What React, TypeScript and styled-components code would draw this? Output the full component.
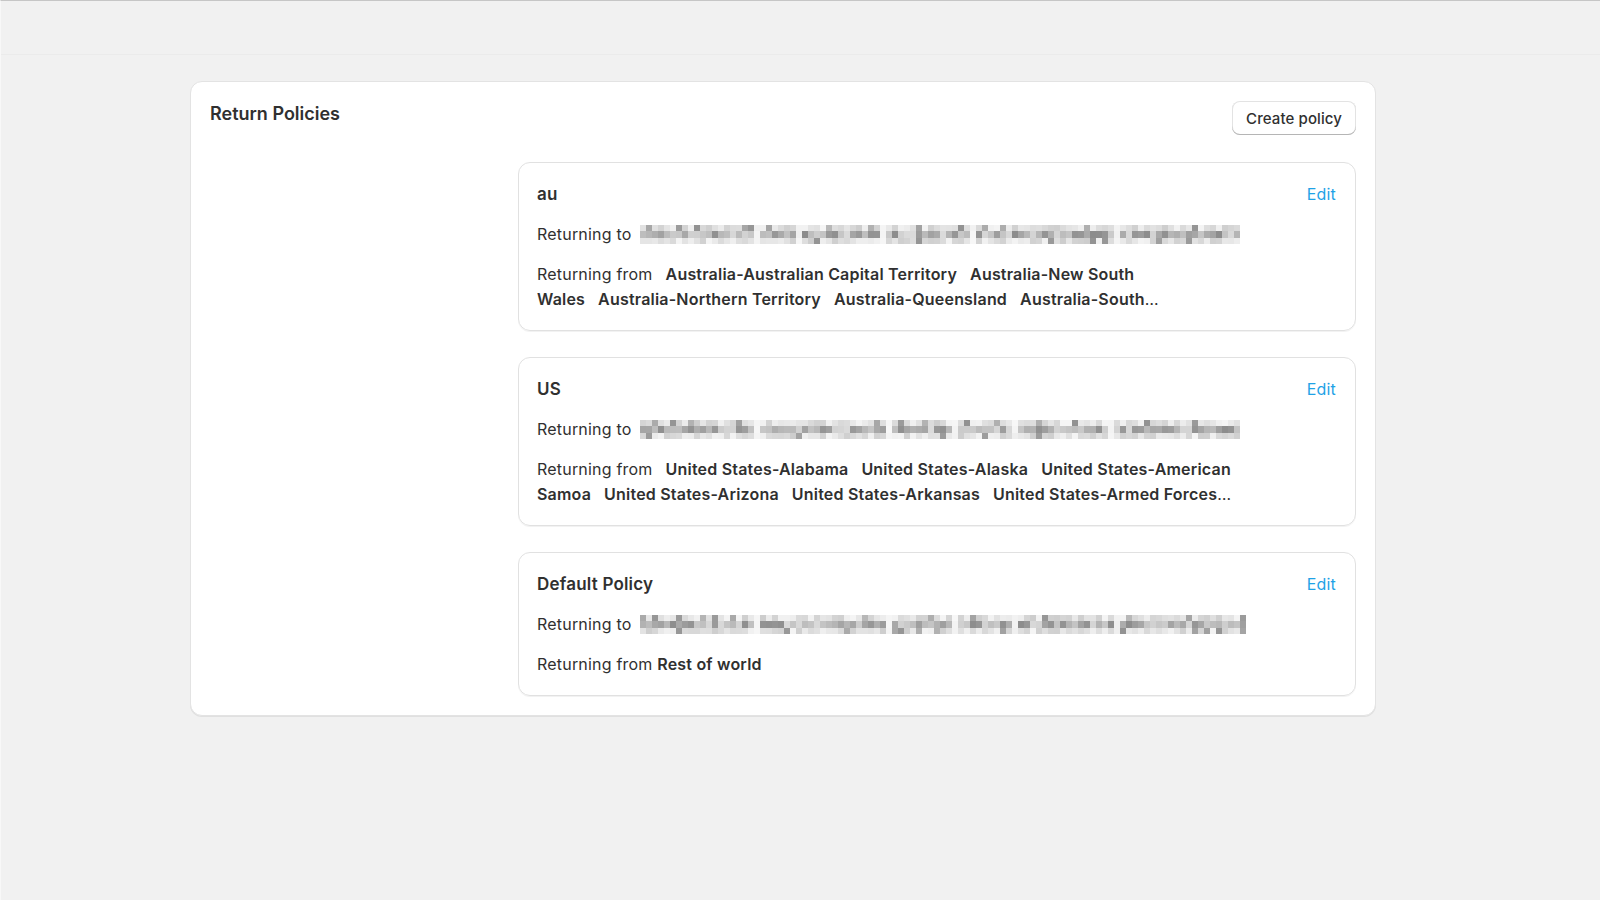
import React from 'react';
import styled, { createGlobalStyle } from 'styled-components';

const GlobalStyle = createGlobalStyle`
  * {
    box-sizing: border-box;
  }

  body {
    margin: 0;
    background: #f1f1f1;
    font-family: Inter, "Noto Sans", "Liberation Sans", sans-serif;
    color: #303030;
    -webkit-font-smoothing: antialiased;
  }
`;

const Page = styled.div`
  min-height: 100vh;
  border-top: 1px solid #c6c6c6;
  border-left: 1px solid #f8f8f8;
`;

const TopStrip = styled.div`
  height: 54px;
  border-bottom: 1px solid #ebebeb;
`;

const Main = styled.main`
  padding: 26px 0 40px 189px;
`;

const Panel = styled.section`
  width: 1186px;
  background: #fff;
  border: 1px solid #e3e3e3;
  border-radius: 12px;
  box-shadow: 0 1px 0 rgba(0, 0, 0, 0.07);
  padding: 19px;
`;

const PanelHeader = styled.div`
  display: flex;
  justify-content: space-between;
  align-items: flex-start;
`;

const Title = styled.h1`
  margin: 0;
  font-size: 18px;
  line-height: 25px;
  font-weight: 600;
  color: #303030;
`;

const CreateButton = styled.button`
  height: 34px;
  padding: 0 14px;
  border: none;
  border-radius: 8px;
  background: #fff;
  font-family: inherit;
  font-size: 15px;
  font-weight: 500;
  letter-spacing: 0.1px;
  color: #303030;
  cursor: pointer;
  box-shadow: inset 0 -1px 0 0 #b5b5b5, inset 0 0 0 1px #e3e3e3;
`;

const PolicyList = styled.div`
  width: 838px;
  margin: 27px 0 0 auto;
  display: flex;
  flex-direction: column;
  gap: 26px;
`;

const PolicyCard = styled.article`
  border: 1px solid #e1e1e1;
  border-radius: 12px;
  box-shadow: 0 1px 0 rgba(0, 0, 0, 0.05);
  padding: 19px 19px 18px 18px;
  display: flex;
  flex-direction: column;
  gap: 15px;
`;

const CardHeader = styled.div`
  display: flex;
  justify-content: space-between;
  align-items: center;
`;

const CardTitle = styled.h2`
  margin: 0;
  font-size: 17px;
  line-height: 25px;
  font-weight: 600;
  letter-spacing: 0.2px;
  color: #303030;
`;

const EditLink = styled.a`
  font-size: 16px;
  line-height: 25px;
  letter-spacing: 0.2px;
  color: #1fa2e6;
  text-decoration: none;
  cursor: pointer;
`;

const Row = styled.div`
  font-size: 16px;
  line-height: 25px;
  letter-spacing: 0.2px;
  color: #303030;
`;

const Clamp = styled(Row)`
  max-width: 704px;
  display: -webkit-box;
  -webkit-line-clamp: 2;
  -webkit-box-orient: vertical;
  overflow: hidden;
`;

const Region = styled.span`
  font-weight: 600;
  margin-left: 13px;
`;

const Strong = styled.strong`
  font-weight: 600;
`;

const RedactedBox = styled.svg`
  vertical-align: -4px;
  margin-left: 8px;
`;

// fake pixelated address, deterministic per seed
function rng(seed: number) {
  let a = seed;
  return () => {
    a |= 0;
    a = (a + 0x6d2b79f5) | 0;
    let t = Math.imul(a ^ (a >>> 15), 1 | a);
    t = (t + Math.imul(t ^ (t >>> 7), 61 | t)) ^ t;
    return ((t ^ (t >>> 14)) >>> 0) / 4294967296;
  };
}

const Redacted: React.FC<{ seed: number; words: number[] }> = ({ seed, words }) => {
  const rand = rng(seed);
  const cell = 6;
  const rows = [0, 6, 13];
  const heights = [6, 7, 6];
  const rects: React.ReactNode[] = [];
  let col = 0;
  words.forEach((len, wi) => {
    for (let i = 0; i < len; i++) {
      rows.forEach((y, ri) => {
        const mid = ri === 1;
        const base = mid ? 140 + rand() * 80 : 205 + rand() * 40;
        const dark = !mid && rand() < 0.1 ? 60 : 0;
        const v = Math.round(Math.min(246, base - dark));
        rects.push(
          <rect key={`${col}-${ri}`} x={col * cell} y={y} width={cell} height={heights[ri]} fill={`rgb(${v},${v},${v})`} />
        );
      });
      col++;
    }
    if (wi < words.length - 1) {
      rows.forEach((y, ri) => {
        const v = Math.round(238 + rand() * 10);
        rects.push(
          <rect key={`${col}-${ri}`} x={col * cell} y={y} width={cell} height={heights[ri]} fill={`rgb(${v},${v},${v})`} />
        );
      });
      col++;
    }
  });
  return (
    <RedactedBox width={col * cell} height={19} shapeRendering="crispEdges" aria-label="redacted address">
      {rects}
    </RedactedBox>
  );
};

interface Policy {
  name: string;
  seed: number;
  words: number[];
  regions?: string[];
  fallback?: string;
}

const policies: Policy[] = [
  {
    name: 'au',
    seed: 11,
    words: [19, 6, 13, 14, 23, 20],
    regions: [
      'Australia-Australian Capital Territory',
      'Australia-New South Wales',
      'Australia-Northern Territory',
      'Australia-Queensland',
      'Australia-South Australia',
      'Australia-Tasmania',
      'Australia-Victoria',
      'Australia-Western Australia',
    ],
  },
  {
    name: 'US',
    seed: 29,
    words: [19, 21, 10, 9, 15, 21],
    regions: [
      'United States-Alabama',
      'United States-Alaska',
      'United States-American Samoa',
      'United States-Arizona',
      'United States-Arkansas',
      'United States-Armed Forces Americas',
      'United States-Armed Forces Europe',
      'United States-California',
    ],
  },
  {
    name: 'Default Policy',
    seed: 47,
    words: [19, 21, 10, 9, 16, 21],
    fallback: 'Rest of world',
  },
];

const App: React.FC = () => {
  return (
    <>
      <GlobalStyle />
      <Page>
        <TopStrip />
        <Main>
          <Panel>
            <PanelHeader>
              <Title>Return Policies</Title>
              <CreateButton>Create policy</CreateButton>
            </PanelHeader>

            <PolicyList>
              {policies.map(policy => (
                <PolicyCard key={policy.name}>
                  <CardHeader>
                    <CardTitle>{policy.name}</CardTitle>
                    <EditLink>Edit</EditLink>
                  </CardHeader>
                  <Row>
                    Returning to
                    <Redacted seed={policy.seed} words={policy.words} />
                  </Row>
                  {policy.regions ? (
                    <Clamp>
                      Returning from
                      {policy.regions.map(region => (
                        <Region key={region}>{region}</Region>
                      ))}
                    </Clamp>
                  ) : (
                    <Row>
                      Returning from <Strong>{policy.fallback}</Strong>
                    </Row>
                  )}
                </PolicyCard>
              ))}
            </PolicyList>
          </Panel>
        </Main>
      </Page>
    </>
  );
};

export default App;
